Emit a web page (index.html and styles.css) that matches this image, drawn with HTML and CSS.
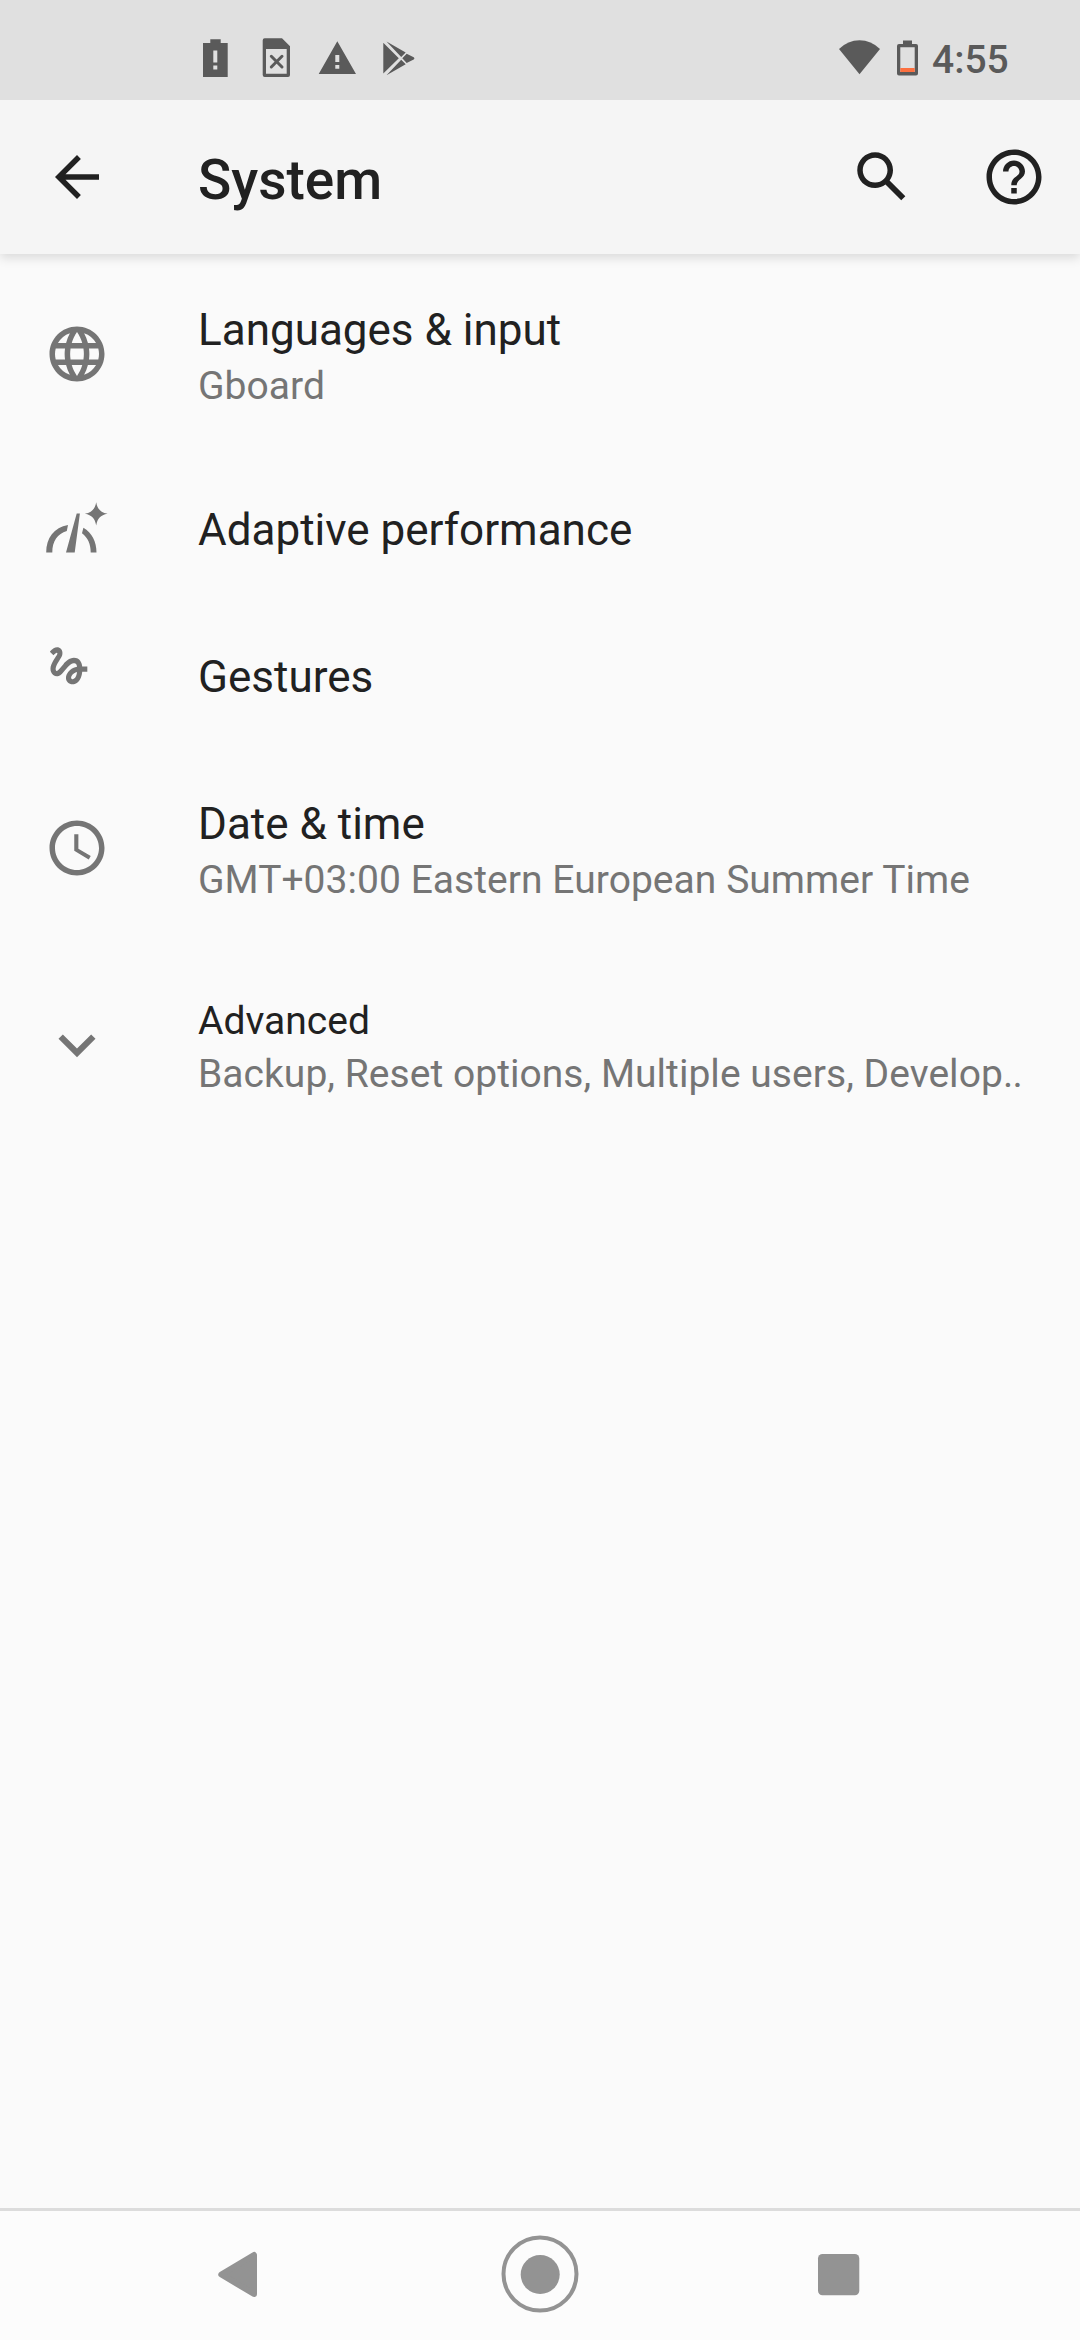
FILE: index.html
```html
<!DOCTYPE html>
<html lang="en">
<head>
<meta charset="utf-8">
<title>System</title>
<link rel="stylesheet" href="styles.css">
</head>
<body>
<div class="screen">
  <div class="status">
    <div class="notifications">
      <svg class="notif" viewBox="185 0 61 100"><path fill-rule="evenodd" d="M210.300 39.300H220.700V43H227.700V77H203V43H210.300ZM213.300 50.500V62.500H217.300V50.500ZM213.300 65.500V69.500H217.300V65.500Z"/></svg>
      <svg class="notif" viewBox="246 0 61 100"><path fill-rule="evenodd" d="M264.700 38.300H282L290 46.300V75Q290 77 288 77H264.700Q262.700 77 262.700 75V40.300Q262.700 38.300 264.700 38.300ZM266 49V73.700H286.700V49Z"/><path class="cross" d="M271.300 56.300l10.700 10.700M282 56.300l-10.700 10.700"/></svg>
      <svg class="notif" viewBox="307 0 61 100"><path fill-rule="evenodd" d="M337.300 41.300L356 74H318.700ZM335.300 55V62H339.300V55ZM335.300 65V68.700H339.300V65Z"/></svg>
      <svg class="notif" viewBox="368 0 61 100"><path d="M383.300 42.700L398.800 58.300 383.300 73.500ZM386.500 41.500L405.700 52.500 401.200 57ZM406.700 53.700L413.700 57.200Q415.300 58.300 413.700 59.400L406.700 63 402.300 58.300ZM386.500 75.200L405.700 64.200 401.200 59.700Z"/></svg>
    </div>
    <div class="system">
      <svg class="wifi" viewBox="839 0 41 100"><path d="M839 49Q848 40.300 859.500 40.300T880 49L859.500 74.300Z"/></svg>
      <svg class="battery" viewBox="897 0 21 100"><path fill-rule="evenodd" d="M903 40.500H912V44H916Q918 44 918 46V73.500Q918 75.500 916 75.500H899Q897 75.500 897 73.500V46Q897 44 899 44H903ZM900.300 47.300V72H914.700V47.300Z"/><path class="charge" d="M900.300 68H914.700V72H900.300Z"/></svg>
      <span class="time">4:55</span>
    </div>
  </div>
  <header class="appbar">
    <svg class="icon" viewBox="0 0 24 24"><path d="M20 11H7.830l5.590-5.590L12 4l-8 8 8 8 1.410-1.410L7.830 13H20z"/></svg>
    <h1 class="heading">System</h1>
    <svg class="icon" viewBox="0 0 24 24"><path d="M20.490 19l-5.730-5.730C15.530 12.200 16 10.910 16 9.500 16 5.910 13.090 3 9.500 3S3 5.910 3 9.500 5.910 16 9.500 16c1.410 0 2.700-.47 3.770-1.240L19 20.490zM5 9.500C5 7.010 7.010 5 9.500 5S14 7.010 14 9.500 11.990 14 9.500 14 5 11.990 5 9.500z"/></svg>
    <svg class="icon" viewBox="0 0 24 24"><path d="M11 18h2v-2h-2zM12 2C6.480 2 2 6.480 2 12s4.480 10 10 10 10-4.480 10-10S17.520 2 12 2zm0 18c-4.410 0-8-3.590-8-8s3.590-8 8-8 8 3.590 8 8-3.590 8-8 8zm0-14c-2.210 0-4 1.790-4 4h2c0-1.100.9-2 2-2s2 .9 2 2c0 2-3 1.750-3 5h2c0-2.250 3-2.500 3-5 0-2.210-1.790-4-4-4z"/></svg>
  </header>
  <main class="list">
    <div class="row tall">
      <div class="lead"><svg class="icon" viewBox="0 0 24 24"><path d="M11.990 2C6.470 2 2 6.480 2 12s4.470 10 9.990 10C17.520 22 22 17.520 22 12S17.520 2 11.990 2zm6.930 6h-2.950a15.650 15.650 0 0 0-1.380-3.560A8.030 8.030 0 0 1 18.920 8zM12 4.040c.83 1.200 1.480 2.530 1.910 3.960h-3.820c.43-1.430 1.080-2.760 1.910-3.960zM4.260 14C4.100 13.360 4 12.690 4 12s.1-1.360.26-2h3.380c-.08.66-.14 1.320-.14 2s.06 1.340.14 2zm.82 2h2.950c.32 1.250.78 2.450 1.380 3.560A7.987 7.987 0 0 1 5.080 16zm2.950-8H5.080a7.987 7.987 0 0 1 4.330-3.560A15.650 15.650 0 0 0 8.030 8zM12 19.960c-.83-1.200-1.480-2.530-1.910-3.960h3.820c-.43 1.430-1.080 2.760-1.910 3.960zM14.340 14H9.660c-.09-.66-.16-1.320-.16-2s.07-1.350.16-2h4.680c.09.65.16 1.320.16 2s-.07 1.340-.16 2zm.25 5.560c.6-1.110 1.060-2.310 1.380-3.560h2.950a8.030 8.030 0 0 1-4.330 3.560zM16.360 14c.08-.66.14-1.320.14-2s-.06-1.340-.14-2h3.380c.16.64.26 1.310.26 2s-.1 1.360-.26 2z"/></svg></div>
      <div class="text"><div class="title">Languages &amp; input</div><div class="sub">Gboard</div></div>
    </div>
    <div class="row">
      <div class="lead"><svg class="icon" viewBox="44 494.500 66 66"><path d="M46.200 552C46.200 537.500 54 526.800 68 524.500L66.800 530.600C57.500 533.200 52.300 541 52.300 552ZM76.700 513H79.900L74.700 552H66ZM83.400 527.200C92 532.200 96.500 541 96.500 552H90.700C90.700 543.300 87.800 537.300 82 532.800ZM96.200 501.700C97.500 508.500 100.300 511.900 107.600 513.300 100.300 514.700 97.500 518 96.200 525 94.900 518 92 514.700 84.900 513.300 92 511.900 94.900 508.500 96.200 501.700Z"/></svg></div>
      <div class="text"><div class="title">Adaptive performance</div></div>
    </div>
    <div class="row">
      <div class="lead gesture"><svg class="icon-small" viewBox="0 0 24 24"><path d="M4.590 6.890c.7-.71 1.400-1.350 1.710-1.220.5.2 0 1.030-.3 1.520-.25.420-2.860 3.890-2.860 6.310 0 1.280.48 2.340 1.340 2.980.75.560 1.740.73 2.640.46 1.070-.31 1.950-1.400 3.060-2.770 1.210-1.490 2.830-3.440 4.080-3.440 1.630 0 1.650 1.010 1.760 1.790-3.780.64-5.380 3.670-5.380 5.370s1.440 3.090 3.210 3.090c1.630 0 4.290-1.330 4.690-6.100H21v-2.500h-2.470c-.15-1.650-1.090-4.200-4.030-4.200-2.250 0-4.180 1.910-4.940 2.840-.58.73-2.060 2.480-2.290 2.720-.25.300-.68.840-1.110.84-.45 0-.72-.83-.36-1.920.35-1.090 1.400-2.860 1.850-3.520.78-1.140 1.300-1.920 1.300-3.280C8.950 3.690 7.310 3 6.440 3 5.120 3 3.970 4 3.720 4.250c-.36.360-.66.660-.88.930zm9.290 11.660c-.31 0-.74-.26-.74-.72 0-.6.73-2.200 2.870-2.760-.3 2.690-1.430 3.480-2.130 3.480z"/></svg></div>
      <div class="text"><div class="title">Gestures</div></div>
    </div>
    <div class="row tall">
      <div class="lead"><svg class="icon" viewBox="0 0 24 24"><path d="M11.990 2C6.470 2 2 6.480 2 12s4.470 10 9.990 10C17.520 22 22 17.520 22 12S17.520 2 11.990 2zM12 20c-4.420 0-8-3.580-8-8s3.580-8 8-8 8 3.580 8 8-3.580 8-8 8zm.5-13H11v6l5.250 3.150.75-1.230-4.500-2.670z"/></svg></div>
      <div class="text"><div class="title">Date &amp; time</div><div class="sub">GMT+03:00 Eastern European Summer Time</div></div>
    </div>
    <div class="row advanced">
      <div class="lead"><svg class="icon-expand" viewBox="0 0 24 24"><path d="M16.590 8.590L12 13.170 7.410 8.590 6 10l6 6 6-6z"/></svg></div>
      <div class="text"><div class="title">Advanced</div><div class="sub">Backup, Reset options, Multiple users, Develop<span class="dots">..</span></div></div>
    </div>
  </main>
  <nav class="navbar">
    <svg class="nav-icon" viewBox="0 0 80 80"><path class="joined" d="M21.300 39.500L54 20V59Z"/></svg>
    <svg class="nav-icon" viewBox="0 0 80 80"><circle class="ring" cx="40" cy="39" r="36.500"/><circle cx="40.200" cy="39.500" r="19.500"/></svg>
    <svg class="nav-icon" viewBox="0 0 80 80"><rect x="18" y="19" width="41.300" height="41.300" rx="4.500"/></svg>
  </nav>
</div>
</body>
</html>
```

FILE: styles.css
```css
* { box-sizing: border-box; margin: 0; }
body { background: #fafafa; font-family: Roboto, sans-serif; color: #212121; }
svg { display: block; fill: currentColor; flex: none; }
.screen { width: 1080px; height: 2340px; display: flex; flex-direction: column; overflow: hidden; }

.status { height: 100px; flex: none; padding: 0 72px 0 185px; display: flex; justify-content: space-between; background: #e0e0e0; color: #5a5a5a; }
.notifications, .system { display: flex; }
.notif { width: 61px; height: 100px; }
.cross { fill: none; stroke: currentColor; stroke-width: 3; stroke-linecap: round; }
.wifi { width: 41px; height: 100px; margin-right: 17px; }
.battery { width: 21px; height: 100px; margin-right: 14px; }
.charge { fill: #fc7040; }
.time { width: 76px; padding-top: 38px; font-size: 39px; line-height: 45px; font-weight: 500; white-space: nowrap; }

.appbar { height: 154px; flex: none; padding: 0 33px 0 44px; display: flex; align-items: center; gap: 66px; background: #f5f5f5; box-shadow: 0 4px 10px rgba(0, 0, 0, .13); clip-path: inset(0 0 -20px 0); }
.icon { width: 66px; height: 66px; }
.heading { flex: 1; margin-left: 22px; padding-top: 6px; font-size: 55px; line-height: 64px; font-weight: 500; }

.list { flex: 1; }
.row { display: flex; height: 147px; }
.tall { height: 200px; }
.lead { width: 154px; padding-left: 44px; display: flex; align-items: center; color: #757575; }
.gesture { align-items: flex-start; padding-top: 40px; }
.icon-small { width: 49.5px; height: 49.5px; }
.icon-expand { width: 74px; height: 74px; margin-left: -4px; }
.text { flex: 1; margin-left: 44px; padding-top: 50px; white-space: nowrap; }
.title { font-size: 44px; line-height: 52px; }
.sub { margin-top: 7px; font-size: 39px; line-height: 46px; letter-spacing: .04px; color: #757575; }
.advanced { height: 194px; }
.advanced .title { font-size: 39px; line-height: 46px; }
.dots { letter-spacing: -.7px; }

.navbar { height: 132px; flex: none; padding: 0 200px 1px; display: flex; align-items: center; justify-content: space-between; background: #fcfcfc; border-top: 3px solid #dcdcdc; color: #939393; }
.nav-icon { width: 80px; height: 80px; }
.joined { stroke: currentColor; stroke-width: 6; stroke-linejoin: round; }
.ring { fill: none; stroke: currentColor; stroke-width: 4; }
```
